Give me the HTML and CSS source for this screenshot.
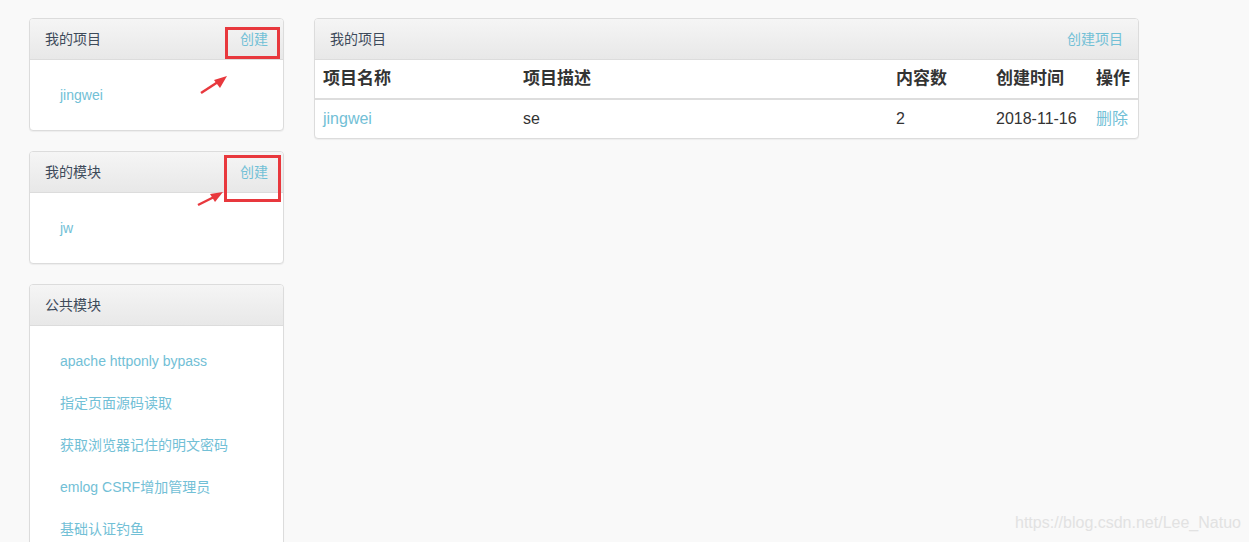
FILE: index.html
```html
<!DOCTYPE html>
<html lang="zh-CN">
<head>
    <meta charset="UTF-8" />
    <title>我的项目</title>
    <link rel="stylesheet" href="styles.css">
</head>
<body>
    <div class="page">
        <!-- Sidebar -->
        <div class="sidebar">
            <div class="panel">
                <div class="panel-heading">
                    <span>我的项目</span>
                    <a class="heading-link" href="#">创建</a>
                </div>
                <div class="panel-body">
                    <a class="list-item" href="#">jingwei</a>
                </div>
            </div>

            <div class="panel">
                <div class="panel-heading">
                    <span>我的模块</span>
                    <a class="heading-link" href="#">创建</a>
                </div>
                <div class="panel-body">
                    <a class="list-item" href="#">jw</a>
                </div>
            </div>

            <div class="panel">
                <div class="panel-heading">
                    <span>公共模块</span>
                </div>
                <div class="panel-body">
                    <a class="list-item" href="#">apache httponly bypass</a>
                    <a class="list-item" href="#">指定页面源码读取</a>
                    <a class="list-item" href="#">获取浏览器记住的明文密码</a>
                    <a class="list-item" href="#">emlog CSRF增加管理员</a>
                    <a class="list-item" href="#">基础认证钓鱼</a>
                </div>
            </div>
        </div>

        <!-- Main -->
        <div class="main">
            <div class="panel">
                <div class="panel-heading">
                    <span>我的项目</span>
                    <a class="heading-link" href="#">创建项目</a>
                </div>
                <table class="table">
                    <thead>
                        <tr>
                            <th class="col-name">项目名称</th>
                            <th class="col-desc">项目描述</th>
                            <th class="col-count">内容数</th>
                            <th class="col-time">创建时间</th>
                            <th class="col-op">操作</th>
                        </tr>
                    </thead>
                    <tbody>
                        <tr>
                            <td><a href="#">jingwei</a></td>
                            <td>se</td>
                            <td>2</td>
                            <td>2018-11-16</td>
                            <td><a href="#">删除</a></td>
                        </tr>
                    </tbody>
                </table>
            </div>
        </div>
    </div>

    <!-- annotations drawn over the screenshot -->
    <div class="mark mark-1"></div>
    <div class="mark mark-2"></div>
    <svg class="arrows" width="300" height="230" viewBox="0 0 300 230">
        <line x1="201" y1="93" x2="221" y2="80" stroke="#e8383d" stroke-width="2.5" />
        <polygon points="227,76 214,80 220,88" fill="#e8383d" />
        <line x1="198" y1="205" x2="216" y2="196" stroke="#e8383d" stroke-width="2.5" />
        <polygon points="223,192 210,194 215,202" fill="#e8383d" />
    </svg>
    <div class="watermark">https://blog.csdn.net/Lee_Natuo</div>
</body>
</html>
```

FILE: styles.css
```css
body {
    margin: 0;
    background-color: #f9f9f9;
    font-family: "Liberation Sans", "Noto Sans CJK SC", sans-serif;
    font-size: 14px;
    color: #333;
}
a {
    color: #72c0d6;
    text-decoration: none;
}
.page {
    display: flex;
    gap: 30px;
    padding: 18px 0 0 29px;
}
.sidebar {
    width: 255px;
}
.main {
    width: 825px;
}
/* Panels */
.panel {
    background-color: #fff;
    border: 1px solid #dcdcdc;
    border-radius: 4px;
    box-shadow: 0 1px 1px rgba(0, 0, 0, 0.05);
    margin-bottom: 20px;
    overflow: hidden;
}
.panel-heading {
    display: flex;
    justify-content: space-between;
    align-items: center;
    height: 20px;
    padding: 10px 15px;
    line-height: 20px;
    color: #3d4a5a;
    background-image: linear-gradient(to bottom, #f5f5f5 0%, #e8e8e8 100%);
    border-bottom: 1px solid #dcdcdc;
}
.heading-link {
    margin-right: 0;
}
.panel-body {
    padding: 15px;
    display: flex;
    flex-direction: column;
    gap: 2px;
}
.list-item {
    display: block;
    padding: 10px 15px;
    line-height: 20px;
}
/* Table */
.table {
    width: 100%;
    border-collapse: collapse;
    font-size: 16px;
}
.table th,
.table td {
    padding: 8px;
    line-height: 22px;
    text-align: left;
}
.table th {
    font-weight: bold;
    font-size: 17px;
    color: #333;
    border-bottom: 2px solid #ddd;
}
.col-name { width: 184px; }
.col-desc { width: 357px; }
.col-count { width: 84px; }
.col-time { width: 84px; }
.col-op { width: 34px; }
/* Screenshot marks */
.mark {
    position: absolute;
    border: 3px solid #e8383d;
    box-sizing: border-box;
}
.mark-1 {
    left: 225px;
    top: 27px;
    width: 55px;
    height: 32px;
}
.mark-2 {
    left: 224px;
    top: 155px;
    width: 57px;
    height: 47px;
}
.arrows {
    position: absolute;
    left: 0;
    top: 0;
}
.watermark {
    position: absolute;
    left: 1015px;
    top: 514px;
    font-size: 16px;
    color: #e2e2e2;
}
```
